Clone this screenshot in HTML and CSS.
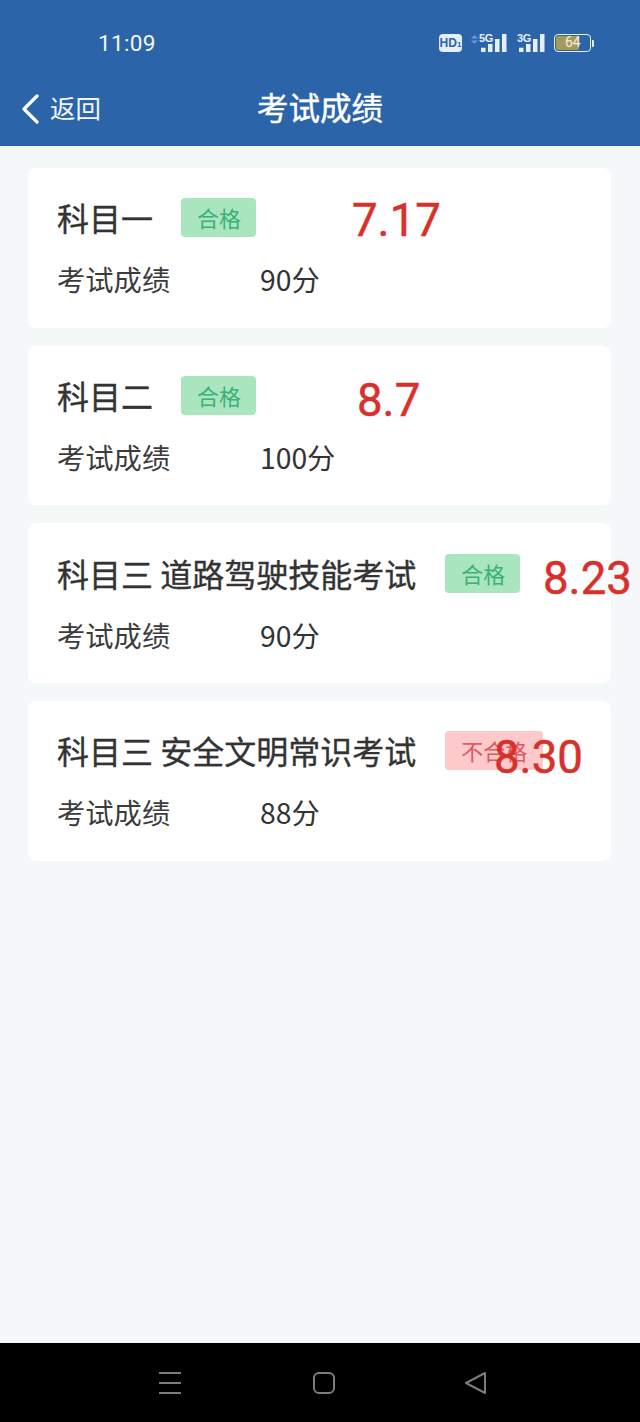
FILE: index.html
```html
<!DOCTYPE html>
<html lang="zh-CN">
<head>
<meta charset="utf-8">
<title>考试成绩</title>
<link rel="stylesheet" href="styles.css">
</head>
<body>
<div class="screen">
  <header class="header">
    <div class="status">
      <span class="time">11:09</span>
      <div class="status-icons">
        <span class="hd">HD<small>1</small></span>
        <span class="signal first">
          <svg class="arrows" width="7" height="9" viewBox="0 0 7 9"><path d="M3.5 0 7 3.5H0zM3.5 9 0 5.5h7z"/></svg>
          <svg class="bars" width="26" height="18" viewBox="0 0 26 18"><path d="M0 13.7h4.5V18H0zM7 10h4.5v8H7zM14 5h4.5v13H14zM21 0h4.5v18H21z"/></svg>
          <span class="net">5G</span>
        </span>
        <span class="signal">
          <svg class="bars" width="26" height="18" viewBox="0 0 26 18"><path d="M0 13.7h4.5V18H0zM7 10h4.5v8H7zM14 5h4.5v13H14zM21 0h4.5v18H21z"/></svg>
          <span class="net">3G</span>
        </span>
        <span class="battery"><span class="cell"><span class="level"></span><span class="pct">64</span></span><span class="tip"></span></span>
      </div>
    </div>
    <div class="nav">
      <div class="back">
        <svg width="20" height="30" viewBox="0 0 20 30"><path d="M17 2 4 15l13 13" fill="none" stroke="#fff" stroke-width="3.2" stroke-linecap="round" stroke-linejoin="round"/></svg>
        <span class="back-text">返回</span>
      </div>
      <h1 class="title">考试成绩</h1>
    </div>
  </header>
  <main class="list">
    <section class="card">
      <div class="head"><h2 class="subject">科目一</h2><span class="tag pass">合格</span></div>
      <div class="row"><span class="label">考试成绩</span><span class="value">90分</span></div>
      <span class="date date-1">7.17</span>
    </section>
    <section class="card">
      <div class="head"><h2 class="subject">科目二</h2><span class="tag pass">合格</span></div>
      <div class="row"><span class="label">考试成绩</span><span class="value">100分</span></div>
      <span class="date date-2">8.7</span>
    </section>
    <section class="card">
      <div class="head"><h2 class="subject long">科目三 道路驾驶技能考试</h2><span class="tag pass">合格</span></div>
      <div class="row"><span class="label">考试成绩</span><span class="value">90分</span></div>
      <span class="date date-3">8.23</span>
    </section>
    <section class="card">
      <div class="head"><h2 class="subject long">科目三 安全文明常识考试</h2><span class="tag fail">不合格</span></div>
      <div class="row"><span class="label">考试成绩</span><span class="value">88分</span></div>
      <span class="date date-4">8.30</span>
    </section>
  </main>
  <footer class="navbar">
    <svg width="26" height="24" viewBox="0 0 26 24"><path d="M2 2h22M2 12h22M2 22h22" fill="none" stroke="#7c7c7c" stroke-width="2"/></svg>
    <svg width="24" height="24" viewBox="0 0 24 24"><rect x="2" y="2" width="20" height="20" rx="5" fill="none" stroke="#7c7c7c" stroke-width="2"/></svg>
    <svg width="24" height="24" viewBox="0 0 24 24"><path d="M21 2v20L2 12z" fill="none" stroke="#7c7c7c" stroke-width="2" stroke-linejoin="round"/></svg>
  </footer>
</div>
</body>
</html>
```
FILE: styles.css
```css
* { box-sizing: border-box; }
html, body { margin: 0; padding: 0; }
body {
  width: 640px;
  height: 1422px;
  overflow: hidden;
  background: #f4f8f9;
  font-family: "Noto Sans CJK SC", "Noto Sans", sans-serif;
}
.screen { display: flex; flex-direction: column; height: 1422px; }

.header { height: 146px; background: #2b64a9; color: #fff; flex: none; }
.status { height: 68px; padding: 18px 46px 0 98px; display: flex; justify-content: space-between; align-items: center; }
.time { font-family: Roboto, sans-serif; font-size: 22.6px; letter-spacing: 0.3px; color: #f2f5fa; }
.status-icons { display: flex; align-items: center; gap: 10px; color: #e6eef8; }
.hd {
  width: 23px; height: 18px; background: #e6eef8; color: #2b64a9; border-radius: 4px;
  font: 700 12px/18px "Liberation Sans", sans-serif; text-align: center;
}
.hd small { font-size: 8px; }
.signal { display: block; height: 18px; width: 28px; position: relative; }
.signal.first { margin-left: 7px; }
.arrows { position: absolute; left: -8px; top: 1px; fill: #6f97cb; }
.net { position: absolute; left: 0; top: -1px; font: 700 11px/11px "Liberation Sans", sans-serif; letter-spacing: -0.3px; }
.bars { fill: #e6eef8; position: absolute; left: 2px; bottom: 0; }
.battery { display: flex; align-items: center; margin-left: -1px; }
.cell {
  width: 37px; height: 18px; border: 1.5px solid #e6eef8; border-radius: 4px;
  position: relative; display: block; overflow: hidden;
}
.level { position: absolute; left: 1px; top: 1px; bottom: 1px; width: 23px; background: #a39a5c; border-radius: 2px; }
.pct { position: absolute; left: 10px; top: 0; font: 14px/15px Roboto, sans-serif; color: #f4f1dc; }
.tip { width: 2px; height: 7px; background: #e6eef8; margin-left: 1px; border-radius: 0 1px 1px 0; }

.nav { position: relative; height: 78px; display: flex; align-items: center; justify-content: center; }
.back { position: absolute; left: 20px; top: 24px; display: flex; align-items: center; gap: 10px; font-size: 25.5px; line-height: 30px; color: #f2f5fa; }
.back-text { margin-bottom: 4px; }
.title { margin: 0 0 2px; font-size: 31.5px; font-weight: 400; -webkit-text-stroke: 0.4px #fff; line-height: 44px; }

.list { flex: 1; padding: 22px 29px 0 28px; display: flex; flex-direction: column; gap: 18.14px; }
.card {
  position: relative; height: 159.6px; background: #fff; border-radius: 8px;
  padding: 30.32px 29px 0;
}
.head { display: flex; align-items: flex-start; gap: 28px; height: 40px; }
.subject { margin: 0; font-size: 32px; font-weight: 400; -webkit-text-stroke: 0.35px #333; line-height: 38px; color: #333; white-space: nowrap; }
.subject.long { margin-right: 1px; }
.tag { height: 39px; padding: 0 15px 0 16px; border-radius: 4px; font-size: 22px; line-height: 39px; white-space: nowrap; }
.pass { background: #a9e6c0; color: #3cb077; }
.fail { background: #fdc9cb; color: #dc5a60; padding-right: 16px; }
.row { display: flex; margin-top: 21px; font-size: 28.3px; line-height: 40px; color: #333; }
.label { width: 203px; color: #3c3c3c; }
.value { color: #333; }

.date {
  position: absolute; font-family: Roboto, sans-serif; font-weight: 400; -webkit-text-stroke: 0.5px #d9302c; font-size: 45.6px; line-height: 54px;
  color: #d9302c; white-space: nowrap;
}
.date-1 { left: 324px; top: 26px; }
.date-2 { left: 329px; top: 28px; }
.date-3 { left: 515px; top: 29px; }
.date-4 { left: 466px; top: 30px; }

.navbar {
  height: 79px; background: #000; flex: none; position: relative;
  display: flex; align-items: center; justify-content: space-between;
  padding: 0 152px 0 157px;
}
```
